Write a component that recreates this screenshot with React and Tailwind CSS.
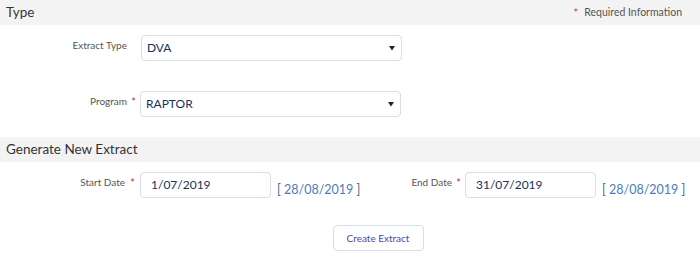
import React from "react";

function Req() {
  return <span className="block text-[#c23934] text-[11px] leading-[11px]">*</span>;
}

function SelectBox({ value }) {
  return (
    <div className="w-[261px] h-[26px] border border-[#d8dde6] rounded-[4px] bg-white flex items-center justify-between pl-[5px] pr-[6px] text-[12px] text-[#16325c]">
      <span>{value}</span>
      <svg width="6" height="6" viewBox="0 0 6 6">
        <path d="M0 1 L6 1 L3 5.5 Z" fill="#222" />
      </svg>
    </div>
  );
}

function DateField({ value }) {
  return (
    <div className="w-[131px] h-[26px] border border-[#d8dde6] rounded-[4px] bg-white flex items-center pl-[10px] text-[12px] text-[#16325c]">
      {value}
    </div>
  );
}

function Today() {
  return (
    <span className="text-[12.5px] text-[#54698d] whitespace-nowrap">
      [ <span className="text-[#4a7bc0]">28/08/2019</span> ]
    </span>
  );
}

export default function App() {
  return (
    <div className="w-[700px] h-[258px] bg-white font-['Lato',sans-serif]">
      {/* Type section */}
      <div className="h-[25px] bg-[#f3f3f3] flex items-center justify-between pl-[6px] pr-[18px]">
        <span className="text-[13.5px] text-[#333]">Type</span>
        <span className="text-[10.5px] text-[#555] flex items-center gap-[6px]">
          <Req />
          Required Information
        </span>
      </div>

      <div className="pt-[10px] flex">
        <div className="w-[127px] text-right text-[10px] text-[#555] pt-[3px]">Extract Type</div>
        <div className="w-[14px]" />
        <SelectBox value="DVA" />
      </div>

      <div className="pt-[30px] flex">
        <div className="w-[127px] text-right text-[10px] text-[#555] pt-[3px]">Program</div>
        <div className="w-[13px] text-center pt-[5px]"><Req /></div>
        <SelectBox value="RAPTOR" />
      </div>

      {/* Generate section */}
      <div className="mt-[20px] h-[25px] bg-[#f3f3f3] flex items-center pl-[6px]">
        <span className="text-[13.5px] text-[#333]">Generate New Extract</span>
      </div>

      <div className="pt-[10px] flex items-start">
        <div className="w-[400px] flex items-start">
          <div className="w-[125px] text-right text-[10px] text-[#555] pt-[3px]">Start Date</div>
          <div className="w-[15px] text-center pt-[5px]"><Req /></div>
          <DateField value="1/07/2019" />
          <div className="ml-[6px] pt-[4px]"><Today /></div>
        </div>
        <div className="w-[52px] text-right text-[10px] text-[#555] pt-[3px]">End Date</div>
        <div className="w-[13px] text-center pt-[5px]"><Req /></div>
        <DateField value="31/07/2019" />
        <div className="ml-[6px] pt-[4px]"><Today /></div>
      </div>

      <div className="pt-[25px] flex justify-center pl-[56px]">
        <button className="w-[91px] h-[26px] border border-[#d8dde6] rounded-[4px] bg-white text-[10px] text-[#4b4b9e]">
          Create Extract
        </button>
      </div>
    </div>
  );
}
